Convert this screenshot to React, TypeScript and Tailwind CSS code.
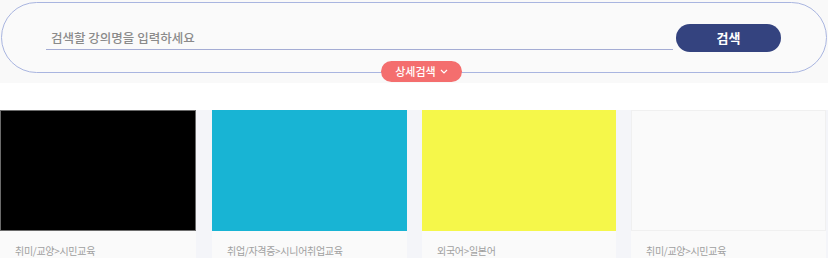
const cards = [
  { img: "bg-black border border-[#6b6b6b]", cat: "취미/교양>시민교육", w: "w-[196px]" },
  { img: "bg-[#18b4d4]", cat: "취업/자격증>시니어취업교육", w: "w-[195px]" },
  { img: "bg-[#f5f74a]", cat: "외국어>일본어", w: "w-[194px]" },
  { img: "bg-[#fafafa] border border-[#f0f0f0]", cat: "취미/교양>시민교육", w: "w-[195px]" },
];

export default function App() {
  return (
    <div className="w-[828px] h-[258px] overflow-hidden bg-white font-['Noto_Sans_CJK_KR','Noto_Sans',sans-serif]">
      <div className="h-[83px] bg-[#f9f9f9] pt-[2px] px-[1px]">
        <div className="relative h-[71px] w-[826px] rounded-full border border-[#a9b5e0] bg-[#fafafa] flex items-center pl-[44px] pr-[45px]">
          <div className="flex-1 h-[24px] mt-[1px] pt-[2px] border-b border-[#a4acd4] flex items-center pl-[5px]">
            <span className="text-[12.5px] font-medium text-[#8a8a8a] leading-none">검색할 강의명을 입력하세요</span>
          </div>
          <button className="ml-[3px] w-[105px] h-[28px] rounded-full bg-[#34437f] text-white text-[13px] font-bold leading-none">
            검색
          </button>
          <button className="absolute left-[379px] top-[58px] w-[81px] h-[21px] rounded-full bg-[#f46e6e] text-white text-[11px] font-medium flex items-center justify-center gap-[4px] leading-none">
            상세검색
            <svg width="8" height="5" viewBox="0 0 8 5" fill="none">
              <path d="M1 1l3 3 3-3" stroke="white" strokeWidth="1.2" />
            </svg>
          </button>
        </div>
      </div>
      <div className="h-[27px]" />
      <div className="flex gap-[15px] bg-[#f4f5f9] h-[148px]">
        {cards.map((c, i) => (
          <div key={i} className={`${c.w} ${i === 1 ? "ml-px" : ""} bg-[#fafafa] flex flex-col`}>
            <div className={`h-[121px] ${c.img}`} />
            <div className="pl-[15px] pt-[15px] text-[10px] tracking-[-0.3px] text-[#a0a0a0] leading-none">{c.cat}</div>
          </div>
        ))}
      </div>
    </div>
  );
}
